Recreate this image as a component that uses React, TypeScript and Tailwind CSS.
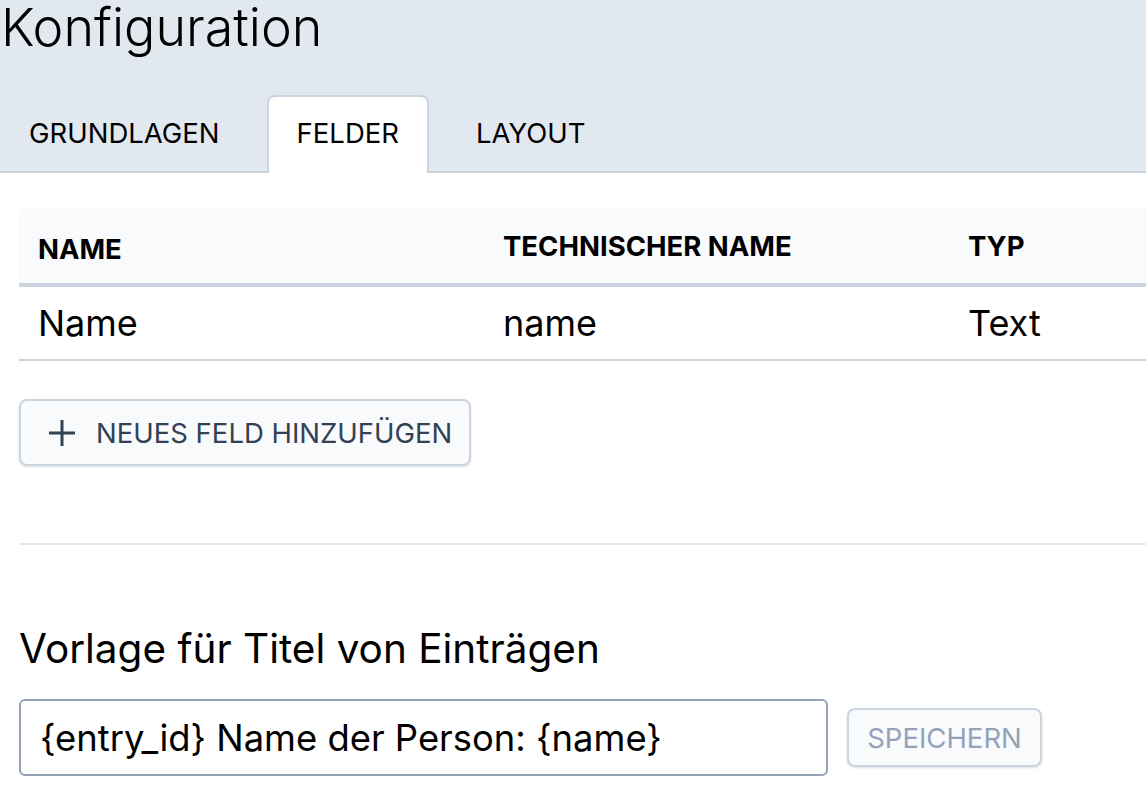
const tabs = ['GRUNDLAGEN', 'FELDER', 'LAYOUT']

export default function App() {
    return (
        <div className="min-h-screen bg-white text-black font-['Inter',sans-serif] overflow-hidden">
            {/* Header */}
            <header className="bg-[#e2e8f0]">
                <h1 className="text-[52px] leading-[56px] font-light pl-[1px]">Konfiguration</h1>
                <nav className="mt-[39px] flex items-end gap-[18px] border-b-2 border-[#cbd5e1]">
                    {tabs.map((t) => {
                        const active = t === 'FELDER'
                        return active ? (
                            <div
                                key={t}
                                className="-mb-[2px] px-[28px] pt-[22px] pb-[26px] text-[27.5px] leading-[28px] bg-white border-2 border-b-0 border-[#cbd5e1] rounded-t-[8px]"
                            >
                                {t}
                            </div>
                        ) : (
                            <div key={t} className="px-[29px] pt-[24px] pb-[24px] text-[27.5px] leading-[28px]">
                                {t}
                            </div>
                        )
                    })}
                </nav>
            </header>

            {/* Content */}
            <main className="pl-[19px] pt-[36px]">
                <table className="w-[1400px] border-collapse text-left">
                    <thead>
                        <tr className="bg-[#f8fafc] border-b-4 border-[#cbd5e1]">
                            <th className="w-[465px] h-[76px] pl-[19px] pt-[5px] text-[27.5px] leading-[28px] font-bold">NAME</th>
                            <th className="w-[465px] h-[76px] pl-[19px] text-[27.5px] leading-[28px] font-bold">TECHNISCHER NAME</th>
                            <th className="h-[76px] pl-[19px] text-[27.5px] leading-[28px] font-bold">TYP</th>
                        </tr>
                    </thead>
                    <tbody>
                        <tr className="border-b-2 border-[#cbd5e1]">
                            <td className="h-[75px] pl-[19px] text-[36px] leading-[36px]">Name</td>
                            <td className="h-[75px] pl-[19px] text-[36px] leading-[36px]">name</td>
                            <td className="h-[75px] pl-[19px] text-[36px] leading-[36px]">Text</td>
                        </tr>
                    </tbody>
                </table>

                <button className="mt-[38px] w-[452px] h-[67px] flex items-center gap-[20px] pl-[27px] bg-[#f8fafc] border-2 border-[#cbd5e1] rounded-[8px] shadow-sm text-[#334155] text-[27.5px] leading-[28px]">
                    <svg width="28" height="28" viewBox="0 0 28 28" fill="none" stroke="currentColor" strokeWidth="3">
                        <path d="M14 1v26M1 14h26" />
                    </svg>
                    NEUES FELD HINZUFÜGEN
                </button>

                <div className="mt-[77px] h-[2px] bg-[#e5e7eb]" />

                <h2 className="mt-[84px] text-[40.5px] leading-[40px]">Vorlage für Titel von Einträgen</h2>

                <div className="mt-[30px] flex items-center gap-[19px]">
                    <input
                        readOnly
                        value="{entry_id} Name der Person: {name}"
                        className="w-[809px] h-[77px] px-[19px] border-2 border-[#94a3b8] rounded-[6px] text-[36.4px] outline-none"
                    />
                    <button className="w-[195px] h-[59px] bg-[#f8fafc] border-2 border-[#cbd5e1] rounded-[8px] shadow-sm text-[#94a3b8] text-[27.5px] leading-[28px]">
                        SPEICHERN
                    </button>
                </div>
            </main>
        </div>
    )
}
